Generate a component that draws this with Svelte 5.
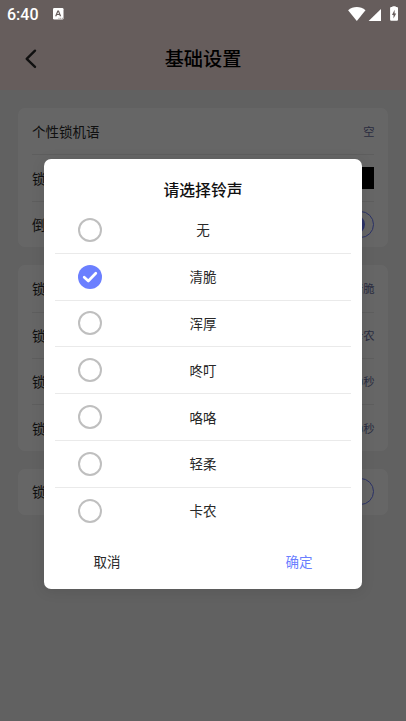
<script lang="ts">
	type Row = { label: string; value?: string; kind?: 'color' | 'on' | 'off' };

	const groups: Row[][] = [
		[
			{ label: '个性锁机语', value: '空' },
			{ label: '锁机背景色', kind: 'color' },
			{ label: '倒计时显示', kind: 'on' }
		],
		[
			{ label: '锁机铃声', value: '清脆' },
			{ label: '锁机结束铃声', value: '卡农' },
			{ label: '锁机提醒时间', value: '10秒' },
			{ label: '锁机铃声时长', value: '10秒' }
		],
		[{ label: '锁机震动', kind: 'off' }]
	];

	const ringtones = ['无', '清脆', '浑厚', '咚叮', '咯咯', '轻柔', '卡农'];

	let selected = $state('清脆');
	let open = $state(true);
</script>

<div class="screen">
	<header>
		<div class="status-bar">
			<span class="clock">6:40</span>
			<svg class="notice" width="11" height="12" viewBox="0 0 11 12">
				<rect width="10.5" height="11.5" rx="1.2" fill="#fff" />
				<path d="M2.1 8.3 4.4 2.5h1.5l2.3 5.8H6.8l-.4-1.2H3.9l-.4 1.2ZM4.3 6H6L5.15 3.8Z" fill="#675d5c" fill-rule="evenodd" />
				<path d="M5.5 10.3h1m.7 0h1m.7 0h1" stroke="#675d5c" stroke-width=".7" />
			</svg>
			<svg class="signals" width="52" height="15" viewBox="0 0 52 15" fill="#fff">
				<path d="M.1 4.3C5-.1 12.6-.1 17.5 4.3L8.8 14.9Z" />
				<path d="M33 3v12H20.6Z" />
				<path d="M44.4 1.1V.2h3.3v.9h1.2q1.1 0 1.1 1.1v11.5q0 1.1-1.1 1.1h-5.7q-1.1 0-1.1-1.1V2.2q0-1.1 1.1-1.1Z" />
				<path d="M46.6 3.8 44 9h1.5v3.6L48.2 7.4h-1.6Z" fill="#675d5c" />
			</svg>
		</div>
		<div class="nav-bar">
			<button class="back" aria-label="返回">
				<svg width="12" height="20" viewBox="0 0 12 20">
					<path d="M10 1.7 1.7 9.8 10 17.9" fill="none" stroke="#2a2a2a" stroke-width="2.4" stroke-linecap="round" stroke-linejoin="round" />
				</svg>
			</button>
			<h1>基础设置</h1>
		</div>
	</header>

	<main>
		{#each groups as group}
			<section class="card">
				{#each group as row}
					<div class="setting">
						<span class="label">{row.label}</span>
						{#if row.kind === 'color'}
							<span class="swatch"></span>
						{:else if row.kind}
							<span class="switch" class:on={row.kind === 'on'}></span>
						{:else}
							<span class="value">{row.value}</span>
						{/if}
					</div>
				{/each}
			</section>
		{/each}
	</main>

	{#if open}
		<div class="overlay">
			<div class="dialog" role="dialog" aria-modal="true">
				<h2>请选择铃声</h2>
				<div class="options">
					{#each ringtones as name}
						<button class="option" onclick={() => (selected = name)}>
							<span class="radio" class:checked={selected === name}>
								{#if selected === name}
									<svg width="24" height="24" viewBox="0 0 24 24">
										<path d="M6.2 12.2 10.3 16 17.8 8.3" fill="none" stroke="#fff" stroke-width="2.7" stroke-linecap="round" stroke-linejoin="round" />
									</svg>
								{/if}
							</span>
							<span class="name">{name}</span>
						</button>
					{/each}
				</div>
				<div class="actions">
					<button onclick={() => (open = false)}>取消</button>
					<button class="confirm" onclick={() => (open = false)}>确定</button>
				</div>
			</div>
		</div>
	{/if}
</div>

<style>
	:global(body) {
		margin: 0;
	}

	.screen {
		position: relative;
		height: 721px;
		overflow: hidden;
		background: #f2f2f2;
		color: #282828;
		font-family: Roboto, 'Noto Sans CJK SC', sans-serif;
		font-size: 13.5px;
	}

	button {
		padding: 0;
		border: 0;
		background: none;
		color: inherit;
		font: inherit;
		cursor: pointer;
	}

	header {
		height: 90px;
		background: #ffe8e6;
	}

	/* System icons stay bright above the dimmed page. */
	.status-bar {
		position: relative;
		z-index: 2;
		display: flex;
		align-items: center;
		height: 28px;
		padding: 0 6px 0 7px;
		color: #fff;
	}
	.clock {
		width: 46px;
		font-size: 16px;
		font-weight: 500;
	}
	.signals {
		margin: 0 0 2px auto;
	}

	.nav-bar {
		display: grid;
		grid-template-columns: 64px 1fr 64px;
		align-items: center;
		height: 62px;
	}
	.back {
		display: flex;
		margin-left: 25px;
	}
	h1 {
		margin: 2px 0 0;
		color: #000;
		font-size: 19.2px;
		font-weight: 500;
		line-height: 28px;
		text-align: center;
	}

	main {
		display: flex;
		flex-direction: column;
		gap: 18px;
		padding: 18px;
	}
	.card {
		padding: 0 14px;
		border-radius: 7px;
		background: #fff;
	}
	.setting {
		display: flex;
		align-items: center;
		justify-content: space-between;
		box-sizing: border-box;
		height: 46.4px;
	}
	.setting + .setting {
		border-top: 1px solid #eaeaea;
	}
	.label {
		padding-bottom: 1px;
	}
	.value {
		padding-bottom: 1px;
		margin-right: -0.5px;
		color: #6b6f9f;
		font-size: 11.3px;
	}
	.swatch {
		width: 46px;
		height: 22px;
		background: #000;
	}
	.switch {
		box-sizing: border-box;
		width: 50px;
		height: 27px;
		padding: 3px 8px;
		border: 1px solid #6b7cff;
		border-radius: 14px;
	}
	.switch.on::after {
		content: '';
		display: block;
		width: 19px;
		height: 19px;
		margin-left: auto;
		border-radius: 50%;
		background: #6b7cff;
	}

	.overlay {
		position: absolute;
		inset: 0;
		background: rgba(0, 0, 0, 0.6);
	}
	.dialog {
		box-sizing: border-box;
		width: 318px;
		height: 430px;
		margin: 159px 0 0 44px;
		padding: 19px 11px 0;
		border-radius: 7px;
		background: #fff;
		box-shadow: 0 2px 14px rgba(0, 0, 0, 0.1);
	}
	h2 {
		margin: 0 0 4px;
		color: #111;
		font-size: 15.8px;
		font-weight: 500;
		line-height: 25px;
		text-align: center;
	}
	.option {
		display: grid;
		grid-template-columns: 70px 1fr 70px;
		align-items: center;
		box-sizing: border-box;
		width: 100%;
		height: 46.8px;
		border-bottom: 1px solid #eaeaea;
	}
	.option:last-child {
		border-bottom-color: transparent;
	}
	.name {
		padding-bottom: 1px;
	}
	.radio {
		box-sizing: border-box;
		width: 24px;
		height: 24px;
		margin-left: 23px;
		border: 2px solid #bfbfbf;
		border-radius: 50%;
	}
	.radio.checked {
		border: 0;
		background: #6b7fff;
	}
	.radio svg {
		display: block;
	}
	.actions {
		display: flex;
		justify-content: space-between;
		padding: 17px 38.5px 0;
		line-height: 20px;
	}
	.confirm {
		color: #6b7fff;
	}
</style>
